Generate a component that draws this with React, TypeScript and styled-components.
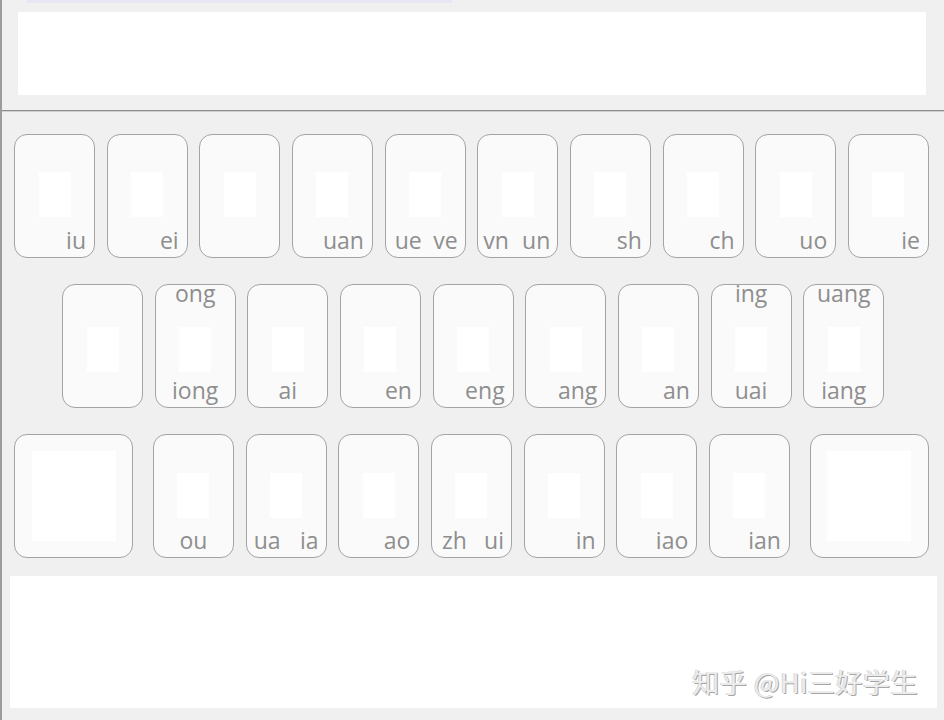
import React from "react";
import styled, { createGlobalStyle } from "styled-components";

const Global = createGlobalStyle`
  html, body { margin: 0; padding: 0; background: #f0f0f0; }
  * { box-sizing: border-box; }
`;

const Screen = styled.div`
  width: 944px;
  height: 720px;
  background: #f0f0f0;
  border-left: 2px solid #9c9c9c;
  display: flex;
  flex-direction: column;
  font-family: "Open Sans", "Liberation Sans", sans-serif;
  overflow: hidden;
`;

const TopStrip = styled.div`
  height: 3px;
  width: 425px;
  margin-left: 25px;
  background: #e7e7f3;
`;

const InputPanel = styled.div`
  margin: 9px 0 0 16px;
  width: 908px;
  height: 83px;
  background: #ffffff;
`;

const Divider = styled.div`
  margin-top: 15px;
  height: 2px;
  border-top: 1px solid #8c8c8c;
  border-bottom: 1px solid #cfcfcf;
`;

const Keyboard = styled.div`
  padding-top: 22px;
  display: flex;
  flex-direction: column;
  gap: 26px;
`;

const Row = styled.div<{ $indent: number }>`
  display: flex;
  align-items: flex-start;
  padding-left: ${(p) => p.$indent}px;
  gap: 11.67px;
`;

const Key = styled.div<{ $w: number; $gapBefore?: number }>`
  position: relative;
  flex: none;
  width: ${(p) => p.$w}px;
  height: 124px;
  margin-left: ${(p) => p.$gapBefore ?? 0}px;
  border: 1px solid #a4a4a4;
  border-radius: 13px;
  background: #fafafa;
  display: flex;
  align-items: center;
  justify-content: center;
`;

const Pad = styled.div<{ $w: number; $h: number; $shift: number }>`
  width: ${(p) => p.$w}px;
  height: ${(p) => p.$h}px;
  background: #ffffff;
  transform: translateY(${(p) => p.$shift}px);
`;

const labelText = `
  position: absolute;
  font-size: 23px;
  line-height: 1;
  color: #8e8e8e;
  white-space: nowrap;
`;

const BottomLabel = styled.span<{ $center?: boolean }>`
  ${labelText}
  bottom: 5px;
  ${(p) =>
    p.$center
      ? "left: 0; right: 0; text-align: center;"
      : "right: 8px;"}
`;

const TopLabel = styled.span`
  ${labelText}
  top: -3px;
  left: 0;
  right: 0;
  text-align: center;
`;

const PairLabel = styled.div<{ $pl: number }>`
  ${labelText}
  bottom: 5px;
  left: ${(p) => p.$pl}px;
  right: 7px;
  display: flex;
  justify-content: space-between;
`;

const BottomPanel = styled.div`
  margin: 18px 0 0 8px;
  width: 927px;
  height: 132px;
  background: #ffffff;
  display: flex;
  align-items: flex-end;
  justify-content: flex-end;
  padding: 0 19px 13px 0;
`;

const Watermark = styled.span`
  font-family: "Noto Sans CJK SC", "Noto Sans", sans-serif;
  font-size: 27px;
  line-height: 1;
  color: #ececec;
  text-shadow: 1px 1px 0 #a6a6a6, -1px 0 0 #d8d8d8;
  letter-spacing: 0.5px;
`;

type KeyDef = {
  b?: string;
  t?: string;
  center?: boolean;
  pair?: [string, string];
  pl?: number;
  wide?: boolean;
};

const row1: KeyDef[] = [
  { b: "iu" },
  { b: "ei" },
  {},
  { b: "uan" },
  { pair: ["ue", "ve"], pl: 9 },
  { pair: ["vn", "un"], pl: 5 },
  { b: "sh" },
  { b: "ch" },
  { b: "uo" },
  { b: "ie" },
];

const row2: KeyDef[] = [
  {},
  { t: "ong", b: "iong", center: true },
  { b: "ai", center: true },
  { b: "en" },
  { b: "eng" },
  { b: "ang" },
  { b: "an" },
  { t: "ing", b: "uai", center: true },
  { t: "uang", b: "iang", center: true },
];

const row3: KeyDef[] = [
  { wide: true },
  { b: "ou", center: true },
  { pair: ["ua", "ia"], pl: 7 },
  { b: "ao" },
  { pair: ["zh", "ui"], pl: 10 },
  { b: "in" },
  { b: "iao" },
  { b: "ian" },
  { wide: true },
];

function KeyCap({ k, shift, gapBefore }: { k: KeyDef; shift: number; gapBefore?: number }) {
  return (
    <Key $w={k.wide ? 119 : 81} $gapBefore={gapBefore}>
      {k.wide ? <Pad $w={84} $h={90} $shift={0} /> : <Pad $w={32} $h={45} $shift={shift} />}
      {k.t && <TopLabel>{k.t}</TopLabel>}
      {k.b && <BottomLabel $center={k.center}>{k.b}</BottomLabel>}
      {k.pair && (
        <PairLabel $pl={k.pl ?? 8}>
          <span>{k.pair[0]}</span>
          <span>{k.pair[1]}</span>
        </PairLabel>
      )}
    </Key>
  );
}

export default function App() {
  return (
    <>
      <Global />
      <Screen>
        <TopStrip />
        <InputPanel />
        <Divider />
        <Keyboard>
          <Row $indent={12}>
            {row1.map((k, i) => (
              <KeyCap key={i} k={k} shift={-2} />
            ))}
          </Row>
          <Row $indent={60}>
            {row2.map((k, i) => (
              <KeyCap key={i} k={k} shift={3} />
            ))}
          </Row>
          <Row $indent={12}>
            {row3.map((k, i) => (
              <KeyCap
                key={i}
                k={k}
                shift={-1}
                gapBefore={i === 1 || i === 8 ? 8.33 : 0}
              />
            ))}
          </Row>
        </Keyboard>
        <BottomPanel>
          <Watermark>知乎 @Hi三好学生</Watermark>
        </BottomPanel>
      </Screen>
    </>
  );
}
